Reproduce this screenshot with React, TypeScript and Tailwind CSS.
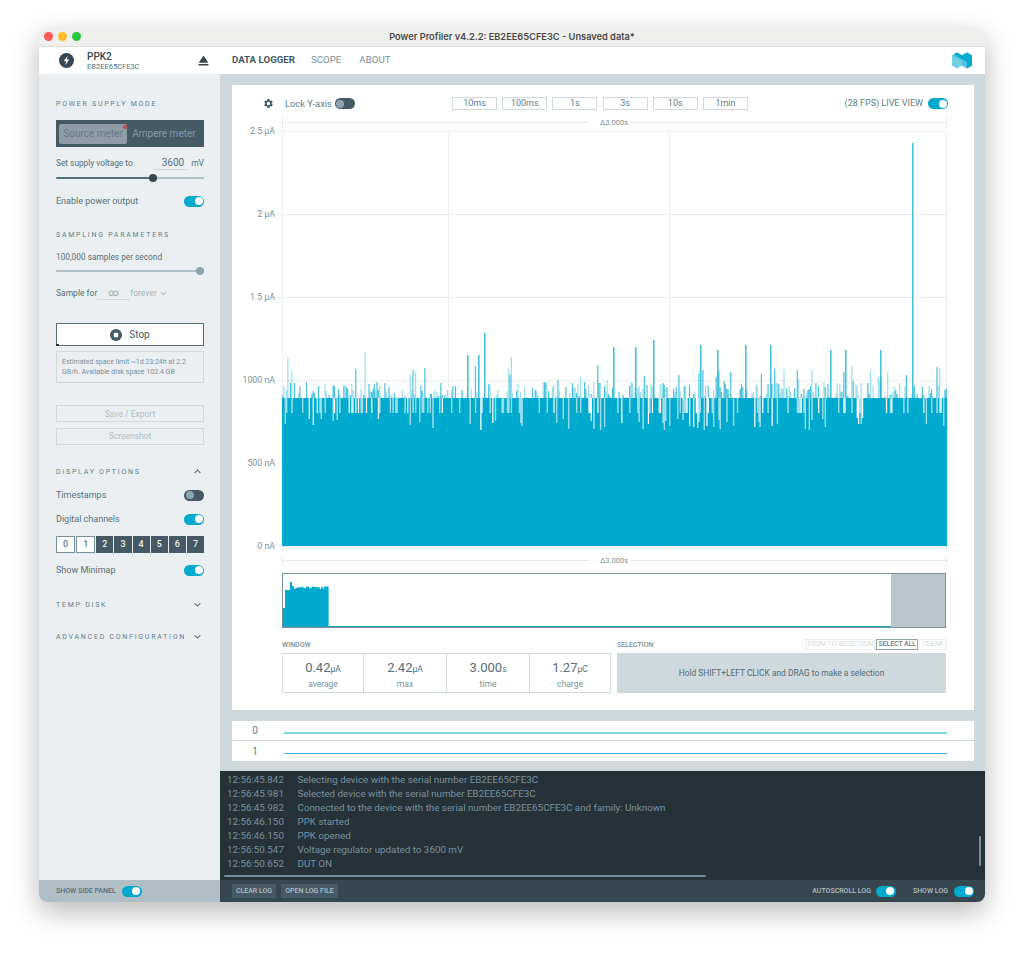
import { MdEject, MdKeyboardArrowDown, MdKeyboardArrowUp, MdSettings } from 'react-icons/md';

const logLines = [
  ['12:56:45.842', 'Selecting device with the serial number EB2EE65CFE3C'],
  ['12:56:45.981', 'Selected device with the serial number EB2EE65CFE3C'],
  ['12:56:45.982', 'Connected to the device with the serial number EB2EE65CFE3C and family: Unknown'],
  ['12:56:46.150', 'PPK started'],
  ['12:56:46.150', 'PPK opened'],
  ['12:56:50.547', 'Voltage regulator updated to 3600 mV'],
  ['12:56:50.652', 'DUT ON'],
];

const windows = ['10ms', '100ms', '1s', '3s', '10s', '1min'];

const stats = [
  { value: '0.42', unit: 'µA', label: 'average', width: 'w-[80px]' },
  { value: '2.42', unit: 'µA', label: 'max', width: 'w-[83px]' },
  { value: '3.000', unit: 's', label: 'time', width: 'w-[83px]' },
  { value: '1.27', unit: 'µC', label: 'charge', width: 'flex-1' },
];

const yTicks = [
  ['2.5 µA', 13],
  ['2 µA', 96],
  ['1.5 µA', 179],
  ['1000 nA', 262],
  ['500 nA', 345],
  ['0 nA', 428],
] as const;

// fixed seed, the trace has to look the same on every render
function makeRandom(seed: number) {
  let s = seed;
  return () => {
    s = (s + 0x6d2b79f5) | 0;
    let t = Math.imul(s ^ (s >>> 15), 1 | s);
    t = (t + Math.imul(t ^ (t >>> 7), 61 | t)) ^ t;
    return ((t ^ (t >>> 14)) >>> 0) / 4294967296;
  };
}

// x in svg units, y in svg units (svg starts at page x 232, y 118)
const bigSpikes = [
  [235, 237], [246, 237], [252, 215], [403, 229], [381, 229], [421, 222], [468, 227],
  [485, 232], [513, 227], [538, 227], [598, 232], [613, 232], [648, 232], [680, 25],
];

function buildTrace() {
  const rnd = makeRandom(42);
  let solid = '';
  let mid = '';
  let light = '';
  for (let x = 50; x < 714; x += 1.33) {
    const r = rnd();
    const top = r < 0.68 ? 280 : r < 0.86 ? 295 : 300 + rnd() * 12;
    solid += `M${x.toFixed(2)} ${top.toFixed(0)}h1.4V428h-1.4z`;
    // lighter fill between a low column and the flat band
    if (top > 280 && rnd() < 0.7) light += `M${x.toFixed(2)} 280h1.3V${top.toFixed(0)}h-1.3z`;
    const s = rnd();
    if (s < 0.56) {
      const y = s < 0.02 ? 232 + rnd() * 18 : s < 0.08 ? 250 + rnd() * 14 : 264 + rnd() * 15;
      const path = `M${x.toFixed(2)} ${y.toFixed(0)}h1.2V280h-1.2z`;
      if (rnd() < 0.55) mid += path;
      else light += path;
    }
  }
  for (const [x, y] of bigSpikes) mid += `M${x} ${y}h1.6V280h-1.6z`;
  return { solid, mid, light };
}

const trace = buildTrace();

function buildMinimap() {
  const rnd = makeRandom(7);
  let d = 'M0 34h2V54H0z';
  for (let x = 2; x < 45; x += 1.5) {
    const top = x < 7 ? 16 : 12 + rnd() * 3;
    d += `M${x} ${top.toFixed(1)}h1.6V54h-1.6z`;
  }
  d += 'M7 8h2V20H7z';
  return d;
}

const Toggle = ({ on = true }: { on?: boolean }) => (
  <div
    className={`flex h-[11px] w-[20px] shrink-0 items-center rounded-full px-[1.5px] ${
      on ? 'justify-end bg-[#00a9ce]' : 'justify-start bg-[#455a64]'
    }`}
  >
    <div className={`h-[8px] w-[8px] rounded-full ${on ? 'bg-white' : 'bg-[#90a4ae]'}`} />
  </div>
);

const Heading = ({ children, className = '' }: { children: string; className?: string }) => (
  <div className={`h-[11px] text-[7px] leading-[13px] tracking-[1.75px] whitespace-nowrap text-[#607d8b] ${className}`}>
    {children}
  </div>
);

const Row = ({ label, on = true, className = '' }: { label: string; on?: boolean; className?: string }) => (
  <div className={`flex h-[14px] items-center justify-between text-[9px] text-[#546e7a] ${className}`}>
    <span className="pt-[1px]">{label}</span>
    <Toggle on={on} />
  </div>
);

const Slider = ({ percent, disabled, className = '' }: { percent: number; disabled?: boolean; className?: string }) => (
  <div className={`flex h-[8px] items-center ${className}`}>
    <div
      className={`h-[2px] rounded-l-full ${disabled ? 'bg-[#b0bec5]' : 'bg-[#546e7a]'}`}
      style={{ width: `${percent}%` }}
    />
    <div className={`-mx-[4px] z-10 h-[8px] w-[8px] shrink-0 rounded-full ${disabled ? 'bg-[#90a4ae]' : 'bg-[#37474f]'}`} />
    <div className="h-[2px] flex-1 bg-[#b0bec5]" />
  </div>
);

const Arrow = ({ up }: { up?: boolean }) =>
  up ? (
    <MdKeyboardArrowUp className="-my-[1px] text-[13px] text-[#546e7a]" />
  ) : (
    <MdKeyboardArrowDown className="-my-[1px] text-[13px] text-[#546e7a]" />
  );

const SidePanel = () => (
  <div className="flex w-[181px] shrink-0 flex-col bg-[#eceff1]">
    <div className="flex flex-1 flex-col pt-[24px] pr-[16px] pl-[17px]">
      <Heading>POWER SUPPLY MODE</Heading>
      <div className="mt-[11px] flex h-[27px] items-center bg-[#455a64] pr-[3px] pl-[3px] text-[10px] text-[#829aa5]">
        <div className="relative flex h-[20px] w-[68px] items-center justify-center rounded-[2px] bg-[#8e9da5] text-[#657a85]">
          Source meter
          <div className="absolute top-[1px] right-0 h-[4px] w-[4px] rounded-full bg-[#c04a50]" />
        </div>
        <div className="flex-1 text-center">Ampere meter</div>
      </div>
      <div className="mt-[9px] flex h-[14px] items-center text-[8.3px] text-[#546e7a]">
        <span>Set supply voltage to</span>
        <span className="ml-auto w-[33px] border-b border-[#cfd8dc] pr-[3px] text-right text-[10px] leading-[13px]">3600</span>
        <span className="ml-[4px] text-[8.5px]">mV</span>
      </div>
      <Slider percent={65.5} className="mt-[4px]" />
      <Row label="Enable power output" className="mt-[12px]" />
      <Heading className="mt-[21px]">SAMPLING PARAMETERS</Heading>
      <div className="mt-[10px] h-[14px] text-[8.3px] leading-[14px] text-[#546e7a]">100,000 samples per second</div>
      <Slider percent={97} disabled className="mt-[3px]" />
      <div className="mt-[11px] flex h-[14px] items-center text-[8.5px] text-[#546e7a]">
        <span>Sample for</span>
        <span className="w-[33px] border-b border-[#cfd8dc] text-center text-[10px] leading-[13px] text-[#90a4ae]">∞</span>
        <span className="text-[#a5b4bb]">forever</span>
        <MdKeyboardArrowDown className="ml-[1px] text-[11px] text-[#a5b4bb]" />
      </div>
      <div className="relative mt-[23px] flex h-[23px] items-center justify-center gap-[7px] border border-[#546e7a] bg-white text-[10px] text-[#455a64]">
        <svg viewBox="0 0 12 12" className="h-[12px] w-[12px]">
          <circle cx="6" cy="6" r="6" fill="#455a64" />
          <rect x="3.8" y="3.8" width="4.4" height="4.4" rx="1" fill="#fff" />
        </svg>
        Stop
        <div className="absolute -bottom-px -left-px h-[2px] w-[3px] bg-[#263238]" />
      </div>
      <div className="mt-[5px] h-[32px] border border-[#cfd8dc] px-[5px] pt-[5px] text-[7px] leading-[10px] text-[#78909c]">
        Estimated space limit ~1d 23:24h at 2.2 GB/h. Available disk space 102.4 GB
      </div>
      <div className="mt-[22px] flex h-[17px] items-center justify-center border border-[#cfd8dc] pt-[1px] text-[8.5px] text-[#b0bec5]">Save / Export</div>
      <div className="mt-[6px] flex h-[17px] items-center justify-center border border-[#cfd8dc] text-[8.5px] text-[#b0bec5]">Screenshot</div>
      <div className="mt-[21px] flex items-center justify-between">
        <Heading>DISPLAY OPTIONS</Heading>
        <Arrow up />
      </div>
      <Row label="Timestamps" on={false} className="mt-[11px]" />
      <Row label="Digital channels" className="mt-[10px]" />
      <div className="mt-[10px] flex h-[17px] gap-[1px]">
        {['0', '1', '2', '3', '4', '5', '6', '7'].map((d, i) => (
          <div
            key={d}
            className={`flex flex-1 items-center justify-center text-[9px] font-medium ${
              i < 2 ? 'border border-[#78909c] bg-white text-[#607d8b]' : 'bg-[#455a64] text-[#eceff1]'
            }`}
          >
            {d}
          </div>
        ))}
      </div>
      <Row label="Show Minimap" className="mt-[10px]" />
      <div className="mt-[22px] flex items-center justify-between">
        <Heading>TEMP DISK</Heading>
        <Arrow />
      </div>
      <div className="mt-[21px] flex items-center justify-between">
        <Heading>ADVANCED CONFIGURATION</Heading>
        <Arrow />
      </div>
    </div>
    <div className="flex h-[22px] items-center gap-[6px] bg-[#b0bec5] pl-[17px] text-[7px] font-medium text-[#546e7a]">
      SHOW SIDE PANEL
      <Toggle />
    </div>
  </div>
);

const Chart = () => (
  <svg width="742" height="450" viewBox="0 0 742 450" className="block">
    {/* grid */}
    <g stroke="#eceff1" strokeWidth="1">
      {yTicks.map(([, y]) => (
        <line key={y} x1="45" x2="714" y1={y + 0.5} y2={y + 0.5} />
      ))}
      <line x1="50.5" x2="50.5" y1="13" y2="433" />
      <line x1="216.5" x2="216.5" y1="13" y2="433" />
      <line x1="437.5" x2="437.5" y1="13" y2="433" />
      <line x1="714.5" x2="714.5" y1="13" y2="433" />
    </g>
    {/* time span rulers */}
    <g stroke="#e3e8eb" strokeWidth="1">
      <line x1="50" x2="357" y1="4.5" y2="4.5" />
      <line x1="398" x2="714" y1="4.5" y2="4.5" />
      <line x1="50.5" x2="50.5" y1="0" y2="9" />
      <line x1="714.5" x2="714.5" y1="0" y2="9" />
      <line x1="50" x2="357" y1="442.5" y2="442.5" />
      <line x1="398" x2="714" y1="442.5" y2="442.5" />
      <line x1="50.5" x2="50.5" y1="437" y2="447" />
      <line x1="714.5" x2="714.5" y1="437" y2="447" />
    </g>
    <text x="382" y="7" textAnchor="middle" fontSize="7.5" fill="#78909c">Δ3.000s</text>
    <text x="382" y="445" textAnchor="middle" fontSize="7.5" fill="#78909c">Δ3.000s</text>
    {yTicks.map(([label, y]) => (
      <text key={label} x="43" y={y + 3} textAnchor="end" fontSize="8.8" fill="#78909c">
        {label}
      </text>
    ))}
    {/* trace */}
    <path d={trace.light} fill="#00a9ce" opacity="0.4" />
    <path d={trace.mid} fill="#00a9ce" opacity="0.72" />
    <path d={trace.solid} fill="#00a9ce" />
    <rect x="50" y="312" width="664" height="116" fill="#00a9ce" />
  </svg>
);

const Minimap = () => (
  <div className="ml-[50px] h-[55px] w-[664px] border border-[#78909c] bg-white">
    <svg width="662" height="53" viewBox="0 0 662 53" className="block">
      <path d={buildMinimap()} fill="#00a9ce" />
      <rect x="0" y="52" width="662" height="1" fill="#1ea3c0" />
      <rect x="608" y="0" width="54" height="53" fill="#b9c5cb" />
    </svg>
  </div>
);

const StatsRow = () => (
  <div className="mt-[11px] ml-[50px] flex w-[664px] gap-[6px]">
    <div className="w-[329px]">
      <div className="h-[14px] text-[7px] leading-[12px] font-medium text-[#78909c]">WINDOW</div>
      <div className="flex h-[40px] border border-[#cfd8dc]">
        {stats.map((s, i) => (
          <div key={s.label} className={`flex flex-col items-center pt-[5px] ${s.width} ${i > 0 ? 'border-l border-[#cfd8dc]' : ''}`}>
            <div className="leading-[16px] text-[#546e7a]">
              <span className="text-[13px]">{s.value}</span>
              <span className="text-[8.5px]">{s.unit}</span>
            </div>
            <div className="mt-[1px] text-[8.5px] leading-[12px] text-[#78909c]">{s.label}</div>
          </div>
        ))}
      </div>
    </div>
    <div className="flex-1">
      <div className="flex h-[14px] items-start justify-between text-[6.8px] leading-[9px]">
        <span className="text-[7px] leading-[12px] font-medium text-[#78909c]">SELECTION</span>
        <div className="flex gap-[1px]">
          <span className="border border-[#eceff1] px-[1px] text-[#cfd8dc]">ZOOM TO SELECTION</span>
          <span className="border border-[#90a4ae] px-[1.5px] font-medium text-[#607d8b]">SELECT ALL</span>
          <span className="border border-[#eceff1] px-[2px] text-[#cfd8dc]">CLEAR</span>
        </div>
      </div>
      <div className="flex h-[40px] items-center justify-center bg-[#cfd8dc] text-[8.4px] text-[#546e7a]">
        Hold SHIFT+LEFT CLICK and DRAG to make a selection
      </div>
    </div>
  </div>
);

const DigitalChannels = () => (
  <div className="mt-[11px] mr-[11px] ml-[12px] h-[40px] bg-white text-[10px] text-[#607d8b]">
    <div className="flex h-[20px] items-center border-b border-[#cfd8dc] pr-[27px]">
      <span className="w-[52px] pr-[6px] text-center">0</span>
      <div className="mt-[5px] h-[2px] flex-1 bg-[#7fd4e6]" />
    </div>
    <div className="flex h-[20px] items-center pr-[27px]">
      <span className="w-[52px] pr-[6px] text-center">1</span>
      <div className="mt-[5px] h-px flex-1 bg-[#2fb8d8]" />
    </div>
  </div>
);

const LogPanel = () => (
  <div className="relative mt-[10px] h-[109px] overflow-hidden bg-[#263238] pt-[2px] pl-[7px] text-[9.8px] leading-[14px] text-[#78909c]">
    {logLines.map(([time, text], i) => (
      <div key={i} className="flex h-[14px] whitespace-nowrap">
        <span className="w-[70.5px] shrink-0">{time}</span>
        <span>{text}</span>
      </div>
    ))}
    {/* scrollbars sit on top of the text */}
    <div className="absolute bottom-[3px] left-[4px] h-[2px] w-[482px] rounded-full bg-[#78909c]" />
    <div className="absolute top-[65px] right-[4px] h-[30px] w-[2px] rounded-full bg-[#78909c]" />
  </div>
);

const LogFooter = () => (
  <div className="flex h-[22px] items-center bg-[#37474f] pr-[11px] pl-[12px] text-[7px] font-medium text-[#b0bec5]">
    <div className="flex h-[14px] w-[44px] items-center justify-center bg-[#455a64]">CLEAR LOG</div>
    <div className="ml-[5px] flex h-[14px] w-[57px] items-center justify-center bg-[#455a64]">OPEN LOG FILE</div>
    <div className="ml-auto flex items-center gap-[5px]">
      AUTOSCROLL LOG
      <Toggle />
    </div>
    <div className="ml-[17px] flex items-center gap-[6px]">
      SHOW LOG
      <Toggle />
    </div>
  </div>
);

const Header = () => (
  <div className="flex h-[27px] shrink-0 items-center bg-white">
    <div className="flex w-[181px] shrink-0 items-center pr-[8px] pl-[20px]">
      <svg viewBox="0 0 15 15" className="h-[15px] w-[15px]">
        <circle cx="7.5" cy="7.5" r="7.5" fill="#37474f" />
        <path d="M8.6 2.8 4.8 8.2h2.3l-.8 4 3.9-5.6H7.9z" fill="#fff" />
      </svg>
      <div className="ml-[13px] text-[#546e7a]">
        <div className="text-[10px] leading-[11px] font-medium text-[#37474f]">PPK2</div>
        <div className="text-[7.5px] leading-[9px]">EB2EE65CFE3C</div>
      </div>
      <MdEject className="ml-auto text-[17px] text-[#37474f]" />
    </div>
    <div className="flex items-center pl-[12px] text-[9.7px] text-[#78909c]">
      <span className="font-bold text-[#455a64]">DATA LOGGER</span>
      <span className="ml-[16px]">SCOPE</span>
      <span className="ml-[18px]">ABOUT</span>
    </div>
    <svg viewBox="0 0 20 17" className="mr-[13px] ml-auto h-[17px] w-[20px]">
      <path d="M0 3.5 5 .5l5 3 5-3 5 3v10l-5 3-5-3-5 3-5-3z" fill="#6fd0e4" />
      <path d="M0 3.5 5 .5l10 6v10l-5-3V9L0 3.5z" fill="#4cc4dd" />
      <path d="M2 2.3 5 .5l6 3.6L15 6.5V10L2 2.3z" fill="#00a9ce" />
      <path d="M10 3.5l5-3 5 3v10l-5 3V6.5z" fill="#00a9ce" />
    </svg>
  </div>
);

const ChartCard = () => (
  <div className="mt-[11px] mr-[11px] ml-[12px] h-[625px] bg-white">
    <div className="box-border flex h-[33px] items-center pt-[4px] text-[9.3px] text-[#607d8b]">
      <div className="flex w-[220px] shrink-0 items-center pl-[31px]">
        <MdSettings className="text-[11px] text-[#455a64]" />
        <span className="ml-[11px]">Lock Y-axis</span>
        <div className="ml-[3px]">
          <Toggle on={false} />
        </div>
      </div>
      <div className="flex gap-[5.2px]">
        {windows.map(w => (
          <div key={w} className="flex h-[13px] w-[45px] items-center justify-center border border-[#cfd8dc] text-[9px]">
            {w}
          </div>
        ))}
      </div>
      <div className="ml-auto flex items-center gap-[5px] pr-[26px] text-[9px]">
        (28 FPS) LIVE VIEW
        <Toggle />
      </div>
    </div>
    <Chart />
    <div className="mt-[5px]">
      <Minimap />
    </div>
    <StatsRow />
  </div>
);

export default function App() {
  return (
    <div className="h-[954px] w-[1024px] overflow-hidden bg-white pt-[27px] pl-[39px] font-['Roboto',sans-serif]">
      <div className="flex h-[875px] w-[946px] flex-col overflow-hidden rounded-[8px] shadow-[0_10px_28px_rgba(0,0,0,0.28)]">
        <div className="relative flex h-[20px] shrink-0 items-center justify-center border-b border-[#dcdcda] bg-[#efefed] font-['Inter',sans-serif] text-[9.25px] font-semibold text-[#4a4a4a]">
          <div className="absolute top-[5px] left-[5px] flex gap-[5.5px]">
            <div className="h-[8.5px] w-[8.5px] rounded-full bg-[#fc5b57]" />
            <div className="h-[8.5px] w-[8.5px] rounded-full bg-[#fdbc2e]" />
            <div className="h-[8.5px] w-[8.5px] rounded-full bg-[#27c83f]" />
          </div>
          Power Profiler v4.2.2: EB2EE65CFE3C - Unsaved data*
        </div>
        <Header />
        <div className="flex min-h-0 flex-1">
          <SidePanel />
          <div className="flex min-w-0 flex-1 flex-col bg-[#cfd8dc]">
            <ChartCard />
            <DigitalChannels />
            <LogPanel />
            <LogFooter />
          </div>
        </div>
      </div>
    </div>
  );
}
